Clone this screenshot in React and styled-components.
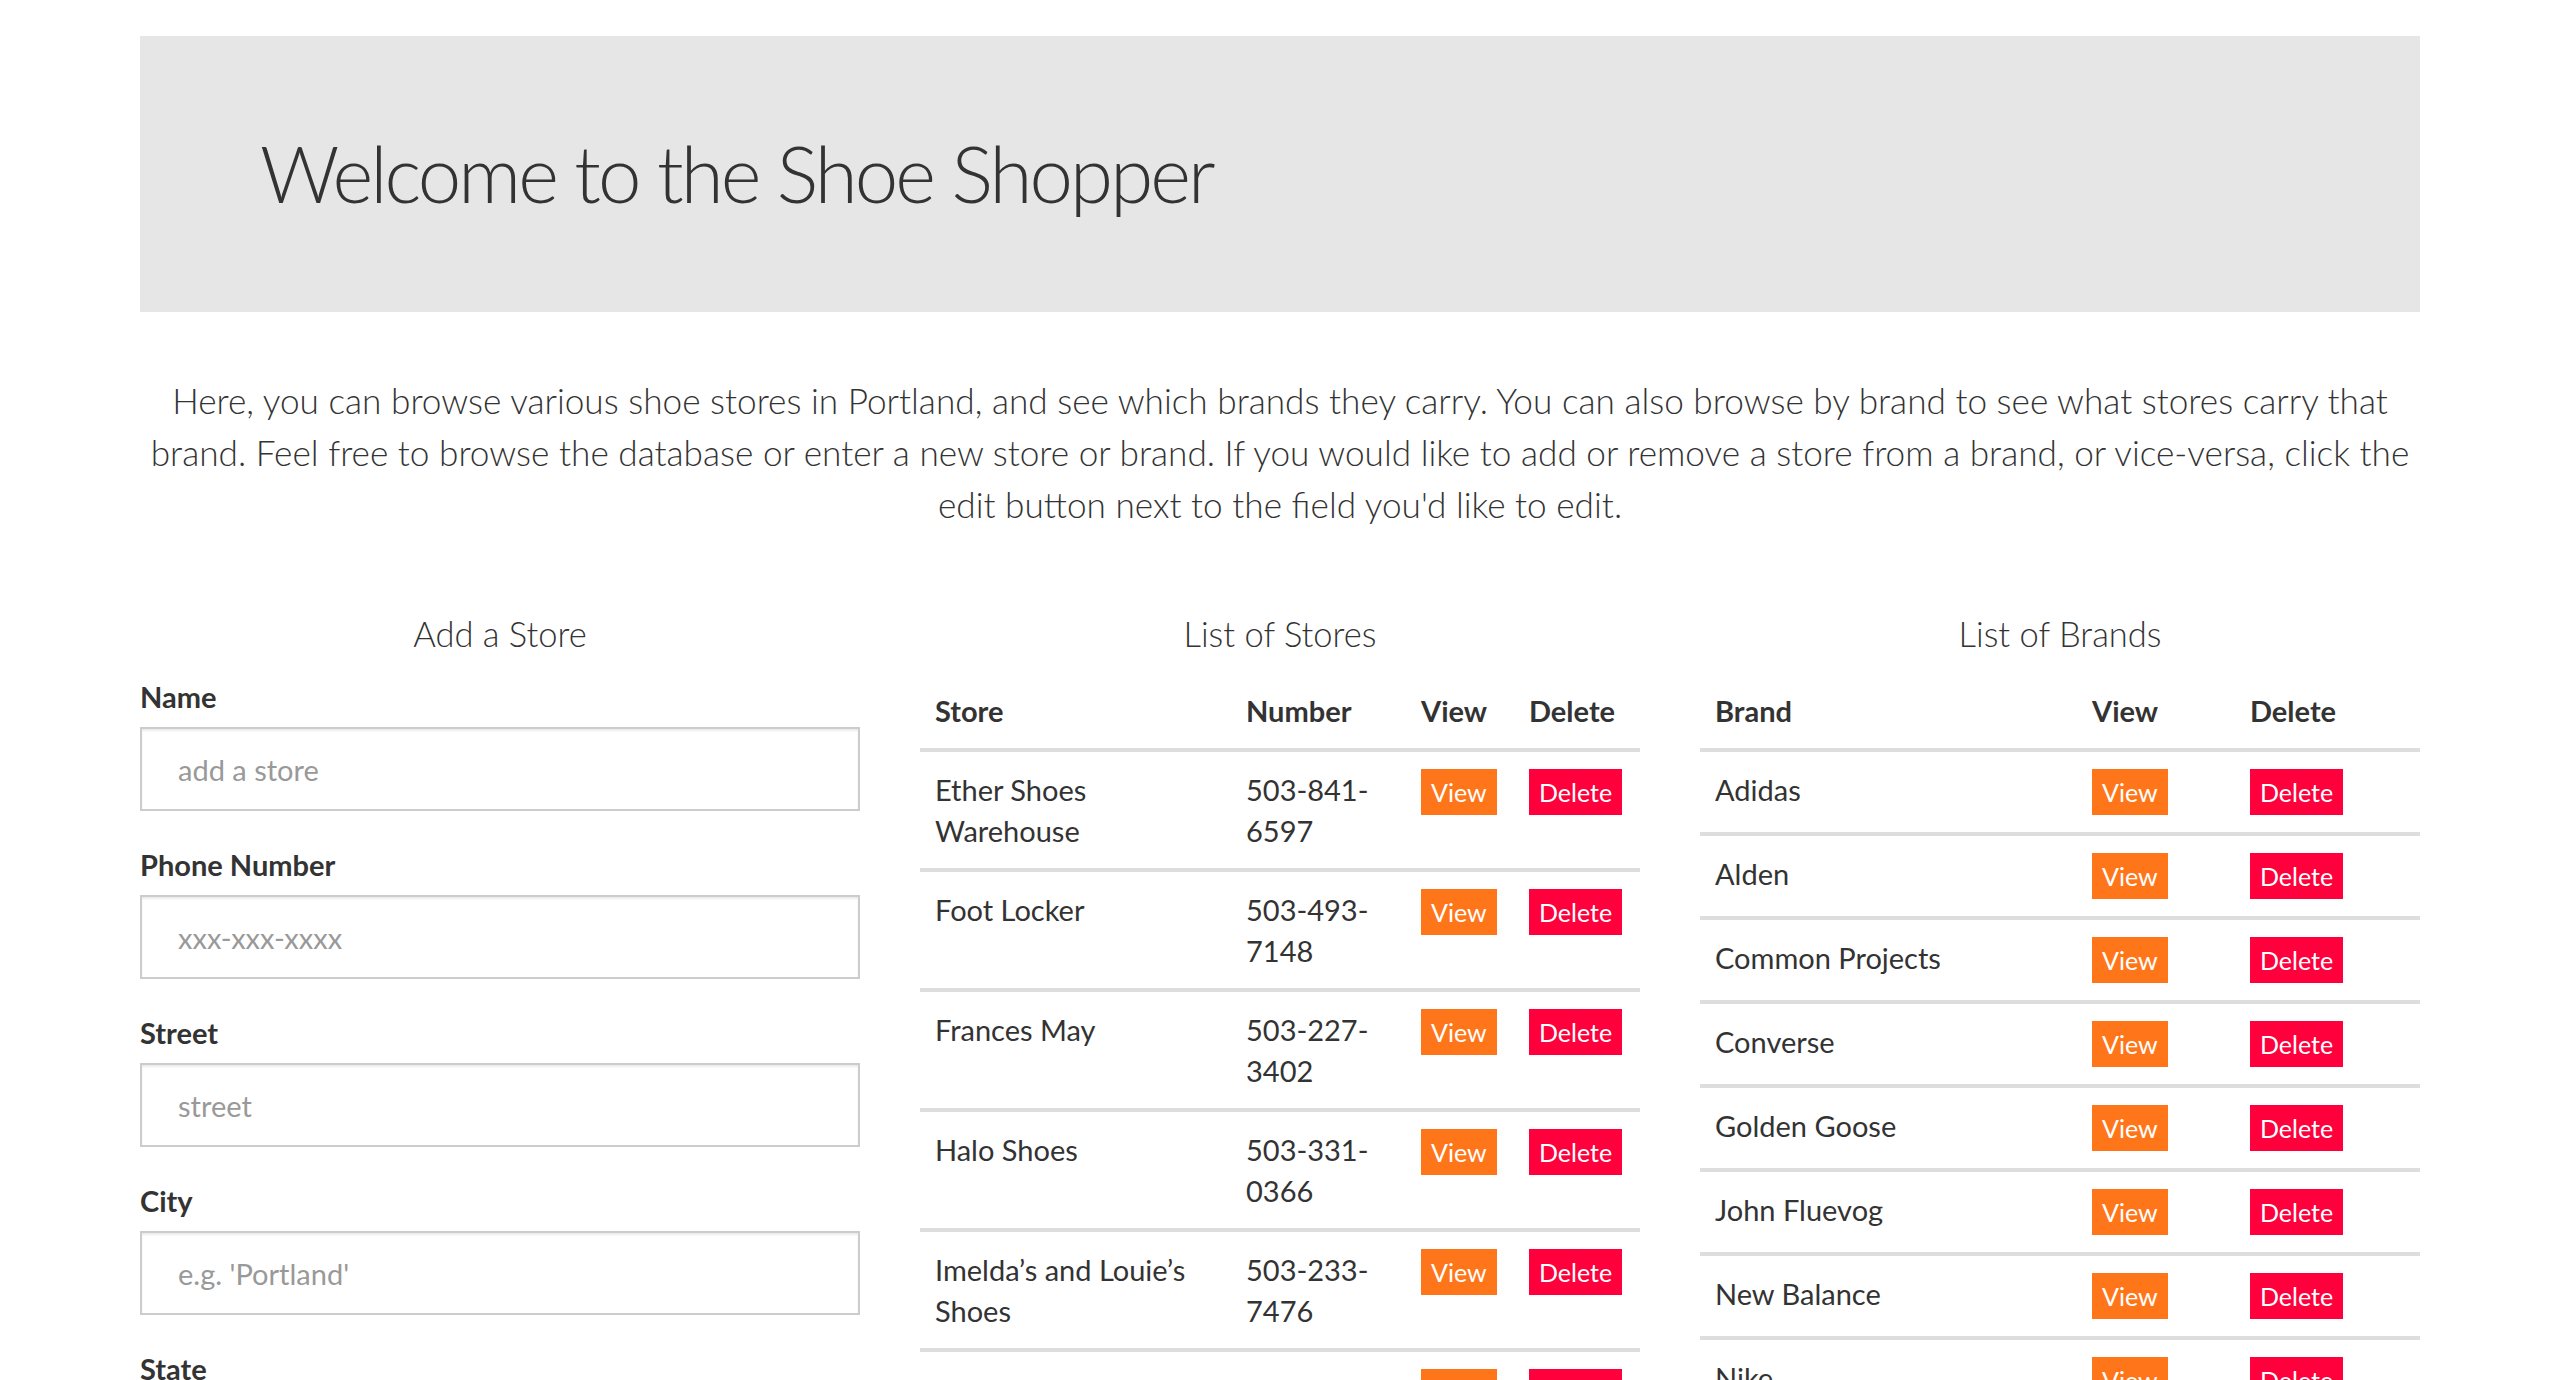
import React from 'react'
import styled, { createGlobalStyle } from 'styled-components'

const GlobalStyle = createGlobalStyle`
  body {
    margin: 0;
    background: #fff;
    color: #333;
    font-family: Lato, "Open Sans", sans-serif;
  }
  * {
    box-sizing: border-box;
  }
`

const stores = [
  { name: 'Ether Shoes Warehouse', phone: ['503-841-', '6597'] },
  { name: 'Foot Locker', phone: ['503-493-', '7148'] },
  { name: 'Frances May', phone: ['503-227-', '3402'] },
  { name: 'Halo Shoes', phone: ['503-331-', '0366'] },
  { name: 'Imelda’s and Louie’s Shoes', phone: ['503-233-', '7476'] },
  { name: 'Lille Boutique', phone: ['503-232-', '1135'] },
]

const brands = [
  'Adidas',
  'Alden',
  'Common Projects',
  'Converse',
  'Golden Goose',
  'John Fluevog',
  'New Balance',
  'Nike',
]

const fields = [
  { label: 'Name', placeholder: 'add a store' },
  { label: 'Phone Number', placeholder: 'xxx-xxx-xxxx' },
  { label: 'Street', placeholder: 'street' },
  { label: 'City', placeholder: "e.g. 'Portland'" },
  { label: 'State', placeholder: "e.g. 'OR'" },
]

const Container = styled.div`
  width: 2280px;
  margin: 0 auto;
  padding-top: 36px;
`

const Jumbotron = styled.header`
  height: 276px;
  background: #e6e6e6;
  display: flex;
  align-items: center;
  padding: 0 120px;
`

const Heading = styled.h1`
  margin: 0;
  font-size: 78px;
  font-weight: 300;
  letter-spacing: -2.9px;
  line-height: 1.1;
  color: #333;
`

const Lead = styled.p`
  margin: 62px 0 0;
  text-align: center;
  font-size: 35.2px;
  font-weight: 300;
  line-height: 52px;
`

const Columns = styled.div`
  display: grid;
  grid-template-columns: repeat(3, 1fr);
  column-gap: 60px;
  margin-top: 79px;
`

const ColumnTitle = styled.h3`
  margin: 0 0 14px;
  text-align: center;
  font-size: 34.5px;
  font-weight: 300;
  line-height: 50px;
`

const Form = styled.form`
  padding-top: 4px;
`

const FieldGroup = styled.div`
  margin-bottom: 34px;
`

const Label = styled.label`
  display: block;
  font-size: 29px;
  font-weight: 700;
  line-height: 40px;
  margin-bottom: 10px;
`

const Input = styled.input`
  display: block;
  width: 100%;
  height: 84px;
  border: 2px solid #ccc;
  border-radius: 0;
  padding: 0 36px;
  font-family: inherit;
  font-size: 29px;
  color: #333;
  box-shadow: inset 0 2px 2px rgba(0, 0, 0, 0.075);
  outline: none;

  &::placeholder {
    color: #999;
  }
`

const Table = styled.table`
  width: 100%;
  border-collapse: collapse;
  table-layout: fixed;
  font-size: 29px;
  line-height: 41px;
`

const Th = styled.th`
  text-align: left;
  font-weight: 700;
  padding: 17px 15px;
  border-bottom: 4px solid #ddd;
  vertical-align: bottom;
`

const Td = styled.td`
  padding: 17px 15px;
  border-top: 4px solid #ddd;
  vertical-align: top;
`

const Button = styled.button`
  display: inline-block;
  vertical-align: top;
  height: 46px;
  padding: 0 10px;
  border: 0;
  border-radius: 0;
  font-family: inherit;
  font-size: 25px;
  line-height: 46px;
  color: #fff;
  background: ${p => (p.$danger ? '#ff003c' : '#ff761a')};
  cursor: pointer;
`

const AddStore = () => (
  <section>
    <ColumnTitle>Add a Store</ColumnTitle>
    <Form>
      {fields.map(f => (
        <FieldGroup key={f.label}>
          <Label>{f.label}</Label>
          <Input type="text" placeholder={f.placeholder} />
        </FieldGroup>
      ))}
    </Form>
  </section>
)

const StoreList = () => (
  <section>
    <ColumnTitle>List of Stores</ColumnTitle>
    <Table>
      <colgroup>
        <col style={{ width: 311 }} />
        <col style={{ width: 175 }} />
        <col style={{ width: 108 }} />
        <col />
      </colgroup>
      <thead>
        <tr>
          <Th>Store</Th>
          <Th>Number</Th>
          <Th>View</Th>
          <Th>Delete</Th>
        </tr>
      </thead>
      <tbody>
        {stores.map(s => (
          <tr key={s.name}>
            <Td>{s.name}</Td>
            <Td>
              {s.phone[0]}
              <br />
              {s.phone[1]}
            </Td>
            <Td>
              <Button>View</Button>
            </Td>
            <Td>
              <Button $danger>Delete</Button>
            </Td>
          </tr>
        ))}
      </tbody>
    </Table>
  </section>
)

const BrandList = () => (
  <section>
    <ColumnTitle>List of Brands</ColumnTitle>
    <Table>
      <colgroup>
        <col style={{ width: 377 }} />
        <col style={{ width: 158 }} />
        <col />
      </colgroup>
      <thead>
        <tr>
          <Th>Brand</Th>
          <Th>View</Th>
          <Th>Delete</Th>
        </tr>
      </thead>
      <tbody>
        {brands.map(b => (
          <tr key={b}>
            <Td>{b}</Td>
            <Td>
              <Button>View</Button>
            </Td>
            <Td>
              <Button $danger>Delete</Button>
            </Td>
          </tr>
        ))}
      </tbody>
    </Table>
  </section>
)

export default function App() {
  return (
    <>
      <GlobalStyle />
      <Container>
        <Jumbotron>
          <Heading>Welcome to the Shoe Shopper</Heading>
        </Jumbotron>
        <Lead>
          Here, you can browse various shoe stores in Portland, and see which brands they carry. You can also
          browse by brand to see what stores carry that brand. Feel free to browse the database or enter a new
          store or brand. If you would like to add or remove a store from a brand, or vice-versa, click the edit
          button next to the field you'd like to edit.
        </Lead>
        <Columns>
          <AddStore />
          <StoreList />
          <BrandList />
        </Columns>
      </Container>
    </>
  )
}
